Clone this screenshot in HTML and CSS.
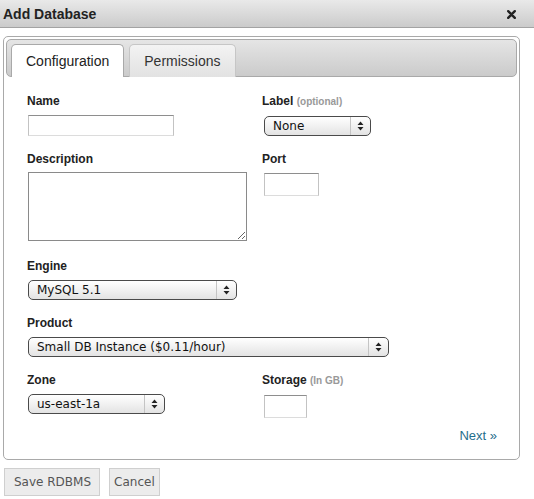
FILE: index.html
```html
<!DOCTYPE html>
<html>
<head>
<meta charset="utf-8">
<title>Add Database</title>
<link rel="stylesheet" href="styles.css">
</head>
<body>
<div class="titlebar">
  <h1 class="title">Add Database</h1>
  <svg class="close" width="9" height="9" viewBox="0 0 9 9"><path d="M1.2 1.2 L7.8 7.8 M7.8 1.2 L1.2 7.8" stroke="#222" stroke-width="2.4" stroke-linecap="round"/></svg>
</div>
<div class="panel">
  <div class="tabbar">
    <div class="tab active">Configuration</div>
    <div class="tab">Permissions</div>
  </div>
  <div class="form">
    <div class="field">
      <label class="lbl">Name</label>
      <div class="text w-name"></div>
    </div>
    <div class="field">
      <label class="lbl">Label <span class="hint">(optional)</span></label>
      <div class="select w-label"><span class="val">None</span><span class="arrows"><svg width="7" height="10" viewBox="0 0 7 10"><path d="M3.5 0.5 L6.5 4 L0.5 4 Z M0.5 6 L6.5 6 L3.5 9.5 Z" fill="#222"/></svg></span></div>
    </div>
    <div class="field">
      <label class="lbl">Description</label>
      <textarea class="area"></textarea>
    </div>
    <div class="field">
      <label class="lbl">Port</label>
      <div class="text w-port"></div>
    </div>
    <div class="field full">
      <label class="lbl">Engine</label>
      <div class="select w-engine"><span class="val">MySQL 5.1</span><span class="arrows"><svg width="7" height="10" viewBox="0 0 7 10"><path d="M3.5 0.5 L6.5 4 L0.5 4 Z M0.5 6 L6.5 6 L3.5 9.5 Z" fill="#222"/></svg></span></div>
    </div>
    <div class="field full">
      <label class="lbl">Product</label>
      <div class="select w-product"><span class="val">Small DB Instance ($0.11/hour)</span><span class="arrows"><svg width="7" height="10" viewBox="0 0 7 10"><path d="M3.5 0.5 L6.5 4 L0.5 4 Z M0.5 6 L6.5 6 L3.5 9.5 Z" fill="#222"/></svg></span></div>
    </div>
    <div class="field">
      <label class="lbl">Zone</label>
      <div class="select w-zone"><span class="val">us-east-1a</span><span class="arrows"><svg width="7" height="10" viewBox="0 0 7 10"><path d="M3.5 0.5 L6.5 4 L0.5 4 Z M0.5 6 L6.5 6 L3.5 9.5 Z" fill="#222"/></svg></span></div>
    </div>
    <div class="field">
      <label class="lbl">Storage <span class="hint">(In GB)</span></label>
      <div class="text w-storage"></div>
    </div>
  </div>
  <div class="next-row"><a class="next">Next »</a></div>
</div>
<div class="buttons">
  <button class="btn btn-save">Save RDBMS</button>
  <button class="btn btn-cancel">Cancel</button>
</div>
</body>
</html>
```

FILE: styles.css
```css
html, body {
  margin: 0;
  padding: 0;
  background: #fff;
}
body {
  width: 534px;
  height: 499px;
  overflow: hidden;
  font-family: "Liberation Sans", Arial, sans-serif;
  color: #222;
}
.titlebar {
  height: 27px;
  border-bottom: 1px solid #a3a3a3;
  background: linear-gradient(#e9e9e9, #cbcbcb);
  display: flex;
  align-items: center;
  justify-content: space-between;
  padding: 0 18px 0 3px;
}
.title {
  margin: 0;
  font-size: 14px;
  font-weight: bold;
  color: #222;
  line-height: 16px;
  padding-top: 1px;
}
.close {
  display: block;
  margin-top: 1px;
}
.panel {
  box-sizing: border-box;
  margin: 8px 0 0 3px;
  width: 517px;
  height: 424px;
  border: 1px solid #a9a9a9;
  border-radius: 5px;
  padding: 2px;
}
.tabbar {
  box-sizing: border-box;
  height: 38px;
  border: 1px solid #a9a9a9;
  border-radius: 5px;
  background: linear-gradient(#e5e5e5, #cbcbcb);
  display: flex;
  align-items: flex-end;
  gap: 5px;
  padding-left: 4px;
}
.tab {
  box-sizing: border-box;
  height: 33px;
  margin-bottom: -1px;
  padding: 0 14px;
  border: 1px solid #c6c6c6;
  border-bottom: none;
  border-radius: 5px 5px 0 0;
  background: linear-gradient(#f3f3f3, #e2e2e2);
  font-size: 14px;
  line-height: 32px;
  color: #333;
}
.tab.active {
  background: #fff;
  border-color: #a9a9a9;
  color: #222;
  padding: 0 14px 0 14px;
}
.form {
  display: grid;
  grid-template-columns: 235px 1fr;
  row-gap: 15px;
  padding: 16px 21px 0 21px;
}
.field {
  display: flex;
  flex-direction: column;
  align-items: flex-start;
}
.full {
  grid-column: 1 / 3;
}
.lbl {
  display: block;
  font-size: 12px;
  font-weight: bold;
  line-height: 16px;
  margin-bottom: 6px;
  color: #222;
}
.hint {
  font-size: 10px;
  color: #999;
}
.text {
  box-sizing: border-box;
  margin-left: 1px;
  border: 1px solid #c3c3c3;
  border-top-color: #8e8e8e;
  border-bottom-color: #dcdcdc;
  background: #fff;
}
.w-name { width: 146px; height: 21px; }
.w-port { width: 55px; height: 23px; margin-left: 2px; }
.w-storage { width: 43px; height: 23px; margin-left: 2px; }
.area {
  display: block;
  box-sizing: border-box;
  width: 219px;
  height: 69px;
  margin: -1px 0 2px 1px;
  border: 1px solid #8a8a8a;
  padding: 0;
  resize: both;
  font: inherit;
}
.select {
  box-sizing: border-box;
  height: 20px;
  margin-left: 1px;
  border: 1px solid #4a4a4a;
  border-radius: 5px;
  background: linear-gradient(#ffffff, #f1f1f1 50%, #e3e3e3);
  display: flex;
  align-items: center;
  font-family: "DejaVu Sans", sans-serif;
  font-size: 12px;
  color: #111;
}
.select .val {
  flex: 1;
  padding-left: 8px;
  white-space: nowrap;
}
.select .arrows {
  width: 19px;
  height: 18px;
  border-left: 1px solid #c4c4c4;
  display: flex;
  align-items: center;
  justify-content: center;
}
.select .arrows svg { display: block; }
.w-label { width: 107px; margin-left: 2px; }
.w-engine { width: 209px; }
.w-product { width: 361px; }
.w-zone { width: 137px; }
.next-row {
  display: flex;
  justify-content: flex-end;
  padding: 10px 20px 0 0;
}
.next {
  font-size: 13px;
  line-height: 16px;
  color: #1f6e8c;
  cursor: pointer;
}
.buttons {
  display: flex;
  gap: 9px;
  padding: 8px 0 0 4px;
}
.btn {
  box-sizing: border-box;
  height: 28px;
  margin: 0;
  border: 1px solid #cfcfcf;
  border-radius: 0;
  background: #ececec;
  font-family: "DejaVu Sans", sans-serif;
  font-size: 12px;
  color: #555;
}
.btn-save { padding: 0 8px 0 9px; }
.btn-cancel { padding: 0 4px; }
```
